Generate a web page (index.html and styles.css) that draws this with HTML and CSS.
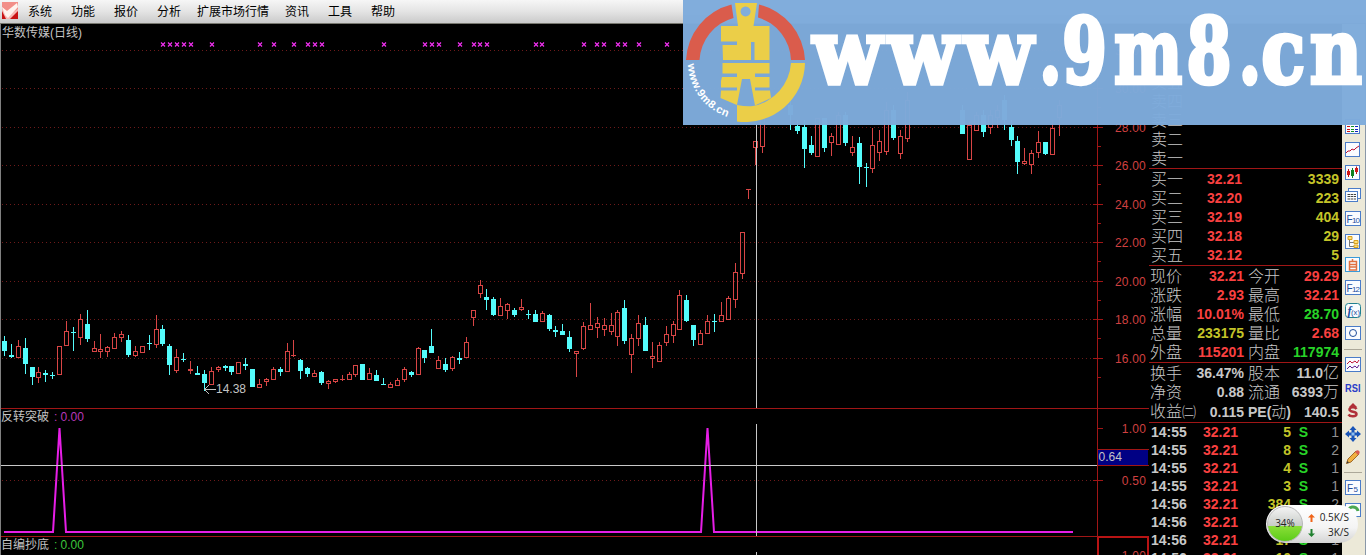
FILE: index.html
```html
<!doctype html>
<html lang="zh-CN">
  <head>
    <meta charset="utf-8">
    <title>华数传媒(日线)</title>
    <link rel="stylesheet" href="styles.css">
  </head>
  <body>
    <div class="menubar">
      <svg class="applogo" width="16" height="17" viewBox="0 0 16 17">
        <rect width="16" height="17" fill="#f6b9b4"/>
        <path d="M0 0H16V7L8 12L0 5Z" fill="#f28f88"/>
        <path d="M0 9L4 17H0Z M8 17L16 9V17Z" fill="#c81414"/>
        <path d="M0 5L5 9L15 1L16 5L6 16L3 13Z" fill="#fff4ee"/>
      </svg>
      <span>系统</span><span>功能</span><span>报价</span><span>分析</span><span class="wide">扩展市场行情</span><span>资讯</span><span>工具</span><span>帮助</span>
    </div>
    <div class="main">
      <svg class="chart" width="1149" height="531" viewBox="0 24 1149 531">
        <g id="grid" shape-rendering="crispEdges"></g>
        <g id="candles" shape-rendering="crispEdges"></g>
        <g id="marks"></g>
        <g class="frame" shape-rendering="crispEdges">
          <path d="M0 408.5H1149 M0 536.5H1149 M1097.5 24V555 M1149 24V555"/>
          <path class="hot" d="M1098 537H1148V556 M1098 537V556"/>
        </g>
        <path class="signal" d="M4 532H53L59.500 428L66 532H701L707.500 428L714 532H1073"/>
        <path class="cross" shape-rendering="crispEdges" d="M0 465.500H1097 M756.500 125V408 M756.500 424V536 M756.500 552V555"/>
        <path class="edge" shape-rendering="crispEdges" d="M.5 24V555"/>
        <g shape-rendering="crispEdges">
          <rect x="1098" y="450" width="50" height="15" fill="#000084"/>
          <path d="M1098 449.500H1149 M1098 465.500H1149" stroke="#a01616"/>
        </g>
        <text class="lbl" x="1098.500" y="461">0.64</text>
        <path d="M204 389.500H216 M209 385L204.500 389.500L209 394" fill="none" stroke="#c0c0c0"/>
        <text class="lbl" x="216" y="393">14.38</text>
        <text class="lbl" x="2" y="37">华数传媒(日线)</text>
        <text class="lbl" x="1" y="421">反转突破</text>
        <text class="lbl mag" x="54" y="421">:</text>
        <text class="lbl mag" x="60.500" y="421">0.00</text>
        <text class="lbl" x="1" y="549">自编抄底</text>
        <text class="lbl grn" x="54" y="549">:</text>
        <text class="lbl grn" x="60.500" y="549">0.00</text>
      </svg>

      <div class="quote">
        <div class="block sell">
          <div class="row"><span>卖五</span></div>
          <div class="row"><span>卖四</span></div>
          <div class="row"><span>卖三</span></div>
          <div class="row"><span>卖二</span></div>
          <div class="row"><span>卖一</span></div>
        </div>
        <div class="block buy">
          <div class="row"><span>买一</span><b class="red">32.21</b><b class="yel">3339</b></div>
          <div class="row"><span>买二</span><b class="red">32.20</b><b class="yel">223</b></div>
          <div class="row"><span>买三</span><b class="red">32.19</b><b class="yel">404</b></div>
          <div class="row"><span>买四</span><b class="red">32.18</b><b class="yel">29</b></div>
          <div class="row"><span>买五</span><b class="red">32.12</b><b class="yel">5</b></div>
        </div>
        <div class="block info">
          <div class="row"><span>现价</span><b class="red">32.21</b><span>今开</span><b class="red">29.29</b></div>
          <div class="row"><span>涨跌</span><b class="red">2.93</b><span>最高</span><b class="red">32.21</b></div>
          <div class="row"><span>涨幅</span><b class="red">10.01%</b><span>最低</span><b class="green">28.70</b></div>
          <div class="row"><span>总量</span><b class="yel">233175</b><span>量比</span><b class="red">2.68</b></div>
          <div class="row"><span>外盘</span><b class="red">115201</b><span>内盘</span><b class="green">117974</b></div>
        </div>
        <div class="block info fin">
          <div class="row"><span>换手</span><b>36.47%</b><span>股本</span><b>11.0<i>亿</i></b></div>
          <div class="row"><span>净资</span><b>0.88</b><span>流通</span><b>6393<i>万</i></b></div>
          <div class="row"><span>收益<small>㈡</small></span><b>0.115</b><span class="pe">PE(<i>动</i>)</span><b>140.5</b></div>
        </div>
        <div class="block ticks">
          <div class="row"><b>14:55</b><b class="red">32.21</b><b class="yel">5</b><b class="green">S</b><em>1</em></div>
          <div class="row"><b>14:55</b><b class="red">32.21</b><b class="yel">8</b><b class="green">S</b><em>2</em></div>
          <div class="row"><b>14:55</b><b class="red">32.21</b><b class="yel">4</b><b class="green">S</b><em>1</em></div>
          <div class="row"><b>14:55</b><b class="red">32.21</b><b class="yel">3</b><b class="green">S</b><em>1</em></div>
          <div class="row"><b>14:56</b><b class="red">32.21</b><b class="yel">384</b><b class="green">S</b><em>2</em></div>
          <div class="row"><b>14:56</b><b class="red">32.21</b><b class="yel">5</b><b class="green">S</b><em>1</em></div>
          <div class="row"><b>14:56</b><b class="red">32.21</b><b class="yel">17</b><b class="green">S</b><em>1</em></div>
          <div class="row"><b>14:56</b><b class="red">32.21</b><b class="yel">10</b><b class="green">S</b><em>1</em></div>
        </div>
      </div>

      <div class="tools">
        <svg viewBox="0 0 16 16"><rect class="bx" x=".5" y=".5" width="14" height="14"/><path d="M2 4.500H5M2 7.500H5M2 10.500H5M2 12.500H5" stroke="#d01010"/><path d="M6 4.500H9M6 7.500H9M6 10.500H9M6 12.500H9" stroke="#109020"/><path d="M10 4.500H13M10 7.500H13M10 10.500H13M10 12.500H13" stroke="#1020c0"/></svg>
        <svg viewBox="0 0 16 16"><rect class="bx" x=".5" y=".5" width="14" height="14"/><path d="M1 11L3 9L5 9L7 7L9 8L11 6L14 4" stroke="#c01030" fill="none"/></svg>
        <svg viewBox="0 0 16 16"><rect class="bx" x=".5" y=".5" width="14" height="14"/><path d="M3.500 4V12M11.500 1.500V9" stroke="#c01010"/><path d="M7.500 3V13" stroke="#108020"/><path d="M2 6H5V10H2ZM10 3H13V7H10Z" fill="#d01818"/><path d="M6 5H9V11H6Z" fill="#108020"/></svg>
        <svg viewBox="0 0 16 16"><rect class="bx" x="3.500" y=".5" width="12" height="10"/><rect class="bx" x=".5" y="3.500" width="12" height="10"/><path d="M2.500 6.500H11M2.500 8.500H11M2.500 11H11" stroke="#444" stroke-dasharray="2.500 .6"/></svg>
        <svg viewBox="0 0 16 16"><rect class="bx" x=".5" y=".5" width="15" height="14"/><text x="1.500" y="12">F</text><text x="7" y="12" class="s" textLength="8">10</text></svg>
        <svg viewBox="0 0 16 16"><rect class="bx" x=".5" y=".5" width="14" height="14"/><path d="M4.500 5V12.500H9M4.500 8.500H9" stroke="#777" fill="none"/><path d="M3 2.500H7V5.500H3ZM9 6.500H13V9.500H9ZM9 11H13V13.500H9Z" fill="#ffe27a" stroke="#d8a020"/></svg>
        <svg viewBox="0 0 16 16"><rect class="bx sky" x=".5" y=".5" width="14" height="14"/><path d="M4.500 4.500H11.500V13H4.500ZM7.500 2V4M4.500 7.500H11M4.500 10H11" stroke="#e07040" stroke-width="1.500" fill="none"/></svg>
        <svg viewBox="0 0 16 16"><rect class="bx" x=".5" y=".5" width="15" height="14"/><text x="1.500" y="12">F</text><text x="7" y="12" class="s" textLength="8">12</text></svg>
        <svg viewBox="0 0 16 16"><rect class="bx teal" x=".5" y=".5" width="15" height="14" rx="3"/><text x="2.500" y="11.500" class="fx">f</text><text x="6" y="11.500" class="x" textLength="9" lengthAdjust="spacingAndGlyphs">(x)</text></svg>
        <svg viewBox="0 0 16 16"><rect class="bx" x=".5" y=".5" width="15" height="13"/><circle cx="8" cy="7" r="3.500" fill="none" stroke="#1e4d9c"/></svg>
        <hr>
        <svg viewBox="0 0 16 16"><rect class="bx" x=".5" y=".5" width="15" height="14"/><path d="M2 7L5 4L7 6L10 4L12 6L14 3" stroke="#c01838" fill="none"/><path d="M2 12L5 9L7 11L10 9L12 11L14 8" stroke="#602090" fill="none"/></svg>
        <svg viewBox="0 0 16 16"><text x="0" y="12" class="rsi" textLength="15.500" lengthAdjust="spacingAndGlyphs">RSI</text></svg>
        <svg viewBox="0 0 16 16"><path d="M8 0L12 4H4Z" fill="#b03038"/><path d="M11.500 6C10 3.500 4.500 4 4.500 6.500C4.500 9.500 11.500 8 11.500 11C11.500 14 5 14 3.500 11.500" stroke="#b03038" stroke-width="2.500" fill="none"/></svg>
        <svg viewBox="0 0 16 16"><path d="M8 0L11.500 4H9.500V6.500H12V4.500L16 8L12 11.500V9.500H9.500V12H11.500L8 16L4.500 12H6.500V9.500H4V11.500L0 8L4 4.500V6.500H6.500V4H4.500Z" fill="#1a55b8"/><rect x="6.500" y="6.500" width="3" height="3" fill="#8ec0f0"/></svg>
        <svg viewBox="0 0 16 16"><path d="M1.500 14.500L3 10L11 2L14 5L6 13Z" fill="#f0b040" stroke="#a06a28"/><path d="M10 3L11.500 1.500Q13 .5 14.500 2.500Q15 4 14 5L13 6Z" fill="#d85a50"/><path d="M1.500 14.500L2.500 12L4 13.500Z" fill="#333"/></svg>
        <hr>
        <svg viewBox="0 0 16 16"><rect class="bx" x=".5" y=".5" width="15" height="14"/><text x="2" y="12">F</text><text x="8.500" y="12" class="s">5</text></svg>
        <svg viewBox="0 0 16 16"><rect class="bx" x=".5" y=".5" width="15" height="13"/><path d="M3 10A5 5 0 0 1 13 8" stroke="#4ca850" stroke-width="3" fill="none"/></svg>
      </div>
    </div>

    <div class="banner">
      <svg width="683" height="125" viewBox="683 0 683 125">
        <path class="r" d="M686 60A60 60 0 0 1 731.500 4.500L733.500 18A46 46 0 0 0 699.500 60Z"/>
        <path class="r" d="M759 4.500A60 60 0 0 1 805 60H791A46 46 0 0 0 758 17.500Z"/>
        <path class="y" d="M805 63A60 60 0 0 1 737 121.500V105Q747 107 753 106A47 47 0 0 0 791 63Z"/>
        <path class="y" fill-rule="evenodd" d="M735 3H757L753.500 26H769.500V60H754.500V42H751V60H723L722.500 45H737V41.500H721V26H738ZM745.500 6.500A5 5 0 1 0 745.600 6.500Z"/>
        <path class="y" d="M722.500 63H769.500V73.500H755V77H769.500V87.500H755V90.500H770L771 98L755 105.500L750 79H742L737 105L720.500 98L721 90.500H737V87.500H721V81L722 77H737V73.500H722.500Z"/>
        <path id="arc" d="M688 64A57.500 57.500 0 0 0 736 119" fill="none"/>
        <text class="ring"><textPath href="#arc" textLength="70">www.9m8.cn</textPath></text>
        <!-- letters of the site name differ in width -->
        <g transform="translate(812 0) scale(.9 1)"><text class="site" y="82.500" x="1 85 169">www</text></g>
        <g transform="translate(1040 0) scale(.72 1)"><text class="site" y="82.500" x="-1 31 103 204 276">.9m8.</text></g>
        <g transform="translate(1262 0) scale(.8 1)"><text class="site" y="82.500" x="-.5 60">cn</text></g>
      </svg>
    </div>

    <div class="netspeed">
      <div class="ball">34%</div>
      <div class="rates">
        <div><svg width="7" height="8" viewBox="0 0 7 8"><path d="M3.500 0L7 3.500H4.500V8H2.500V3.500H0Z" fill="#f06418"/></svg><span>0.5K/S</span></div>
        <div><svg width="7" height="8" viewBox="0 0 7 8"><path d="M3.500 8L7 4.500H4.500V0H2.500V4.500H0Z" fill="#208030"/></svg><span>3K/S</span></div>
      </div>
    </div>
    <script src="chart.js"></script>
  </body>
</html>
```
FILE: styles.css
```css
body {margin: 0; width: 1366px; height: 555px; overflow: hidden; position: relative; background: #000; font-family: "Liberation Sans", "Noto Sans CJK SC", sans-serif;}
.menubar {display: flex; align-items: center; box-sizing: border-box; height: 24px; padding: 0 0 2px 2px; background: linear-gradient(#f6f6f6, #e4e4e4 50%, #cacaca); border-bottom: 1px solid #77776f; font-size: 12px; color: #000;}
.menubar span {width: 43px; white-space: nowrap;}
.menubar span.wide {width: 88px; margin-left: -3px;}
.applogo {margin-right: 10px;}
.main {display: flex; height: 531px;}

.chart {flex: none; display: block;}
.grid {stroke: #6e1a1a; stroke-dasharray: 1 3;}
.tick {stroke: #a01616;}
.axis {font-size: 12px; letter-spacing: .2px; fill: #d04040; text-anchor: end;}
.frame path {stroke: #a01616; fill: none;}
.frame .hot {stroke: #b81414; stroke-width: 2;}
.up {fill: none; stroke: #d84545;}
.up.wick {stroke: #d84545;}
.down {fill: #54fcfc; stroke: none;}
.down.wick {stroke: #54fcfc;}
.mark {stroke: #f030f0; stroke-width: 1.2; fill: none;}
.signal {stroke: #e61ee6; stroke-width: 2; fill: none;}
.cross {stroke: #c8c8c8; fill: none;}
.edge {stroke: #808080;}
.lbl {font-size: 12px; fill: #c4c4c4;}
.lbl.mag {fill: #b838b8;}
.lbl.grn {fill: #3cc83c;}

.quote {flex: none; width: 193px; box-sizing: border-box; color: #c8c8c8; font-size: 16px; overflow: hidden;}
.block {box-sizing: border-box; border-bottom: 1px solid #a01616; padding: 1px 3px 0 2px;}
.row {display: grid; align-items: center; height: 19px; line-height: 19px; white-space: nowrap;}
.row > span {font-weight: 300;}
.row b {font-size: 14px; text-align: right;}
.row i {font-style: normal; font-weight: 300; font-size: 16px; line-height: 1;}
.sell {height: 145px; padding-top: 49px;}
.buy {height: 97px;}
.buy .row {grid-template-columns: 36px 55px 1fr;}
.info {height: 97px; padding-left: 1px;}
.info .row {grid-template-columns: 36px 58px 36px 1fr; }
.info .row > span + b + span {padding-left: 4px;}
.fin {height: 60px;}
.fin small {font-size: 14px;}
.row .pe {font-size: 14px; font-weight: bold;}
.row .pe i {font-size: 15px;}
.fin .row {grid-template-columns: 36px 58px 44px 1fr;}
.ticks {height: 150px; padding-top: 0; border-bottom: 0;}
.ticks .row {height: 18px; line-height: 18px; grid-template-columns: 36px 51px 53px 17px 1fr;}
.ticks b:first-child {text-align: left;}
.ticks em {font-style: normal; font-size: 14px; text-align: right; color: #909090;}
.red {color: #fa4040;}
.yel {color: #c4c428;}
.green {color: #28d428;}

.tools {flex: none; box-sizing: border-box; width: 24px; padding: 95px 0 0 3px; background: #ece9d8; border-right: 1px solid #8a98a8; overflow: hidden;}
.tools svg {display: block; width: 16px; height: 16px; margin-bottom: 7px;}
.tools hr {width: 18px; height: 1px; margin: 0 0 7px -1px; border: 0; background: #aca899;}
.bx {fill: #fafcff; stroke: #4a7cc8;}
.bx.sky {stroke: #3a9ad8;}
.bx.teal {stroke: #208090;}
.tools text {font-size: 10px; fill: #1e4d9c;}
.tools .s {font-size: 8px;}
.tools .fx {font: italic bold 12px "Liberation Serif", serif;}
.tools .x {font-size: 8px;}
.tools .rsi {font-size: 11px; font-weight: bold; fill: #2a3cc8;}

.banner {position: absolute; left: 683px; top: 0; width: 683px; height: 125px; background: rgba(126, 171, 219, .975);}
.banner svg {display: block;}
.banner .r {fill: #da5c4c;}
.banner .y {fill: #ebce48;}
.ring {font: bold 11px "Liberation Sans", sans-serif; fill: #fff;}
.site {font: bold 89px "DejaVu Serif", serif; fill: #fff; stroke: #fff; stroke-width: 4.5px;}

.netspeed {position: absolute; left: 1266px; top: 505px; width: 92px; height: 38px; box-sizing: border-box; padding: 1px 0 0 1px; display: flex; border-radius: 19px; background: linear-gradient(#fff, #f4f4f4 60%, #d4d4d4); color: #222; font-family: "Open Sans", sans-serif;}
.ball {width: 34px; height: 34px; border: 1px solid #b8b8b8; border-radius: 50%; line-height: 33px; text-align: center; font-size: 10px; background: linear-gradient(#f4f4f4, #c8ccc8 55%, #8ade38 56%, #5ccc18);}
.rates {flex: 1; padding: 4px 9px 0 5px; font-size: 10px;}
.rates div {display: flex; justify-content: space-between; align-items: center; height: 15px; line-height: 15px;}
```
FILE: chart.js
```js
// x, high, body top, body bottom, low; negative x = falling day
var days = [
  [-4,336,341,351,356],[-11,344,355,357,358],[18,340,346,358,358],[-25,338,348,364,374],[-32,367,367,377,385],
  [38,367,372,378,383],[-45,370,373,375,382],[-52,372,375,376,379],[59,346,346,375,375],[66,321,331,346,346],
  [-73,327,332,333,351],[80,314,319,338,345],[-87,310,324,339,342],[94,341,348,352,352],[100,334,349,352,358],
  [107,346,347,352,357],[114,333,337,349,349],[121,331,334,338,342],[-128,335,340,355,357],[135,346,351,356,357],
  [142,346,346,353,353],[-149,335,343,344,350],[156,315,329,345,348],[-162,325,329,344,346],[-169,344,346,365,375],
  [176,349,357,371,373],[-183,353,359,360,362],[190,361,369,371,374],[-197,366,373,375,375],[-204,370,374,383,391],
  [211,367,371,385,385],[218,366,367,370,372],[-225,365,366,368,371],[-231,366,366,372,375],[238,362,362,374,374],
  [-245,358,364,366,370],[-252,369,369,387,387],[259,379,384,388,388],[266,378,379,382,386],[273,367,369,380,380],
  [-280,367,369,372,376],[287,343,351,372,372],[293,340,355,356,357],[-300,359,360,371,379],[-307,367,368,374,377],
  [314,370,373,377,377],[-321,371,372,383,385],[328,380,381,384,389],[335,379,379,382,383],[342,375,379,380,381],
  [349,372,374,380,380],[355,365,365,375,377],[-362,364,364,380,380],[369,368,373,380,380],[-376,370,375,381,381],
  [-383,378,384,385,385],[390,382,384,388,388],[397,378,380,386,386],[404,367,369,380,382],[-411,371,372,375,377],
  [418,347,348,375,375],[-424,350,350,358,363],[-431,329,346,353,353],[438,356,360,369,369],[-445,358,364,370,372],
  [452,356,357,369,371],[-459,352,358,360,364],[466,337,342,358,358],[473,310,310,318,326],[480,280,285,294,298],
  [-486,289,297,300,310],[-493,297,299,315,316],[500,298,306,316,316],[507,303,304,311,319],[-514,308,310,315,317],
  [521,299,307,310,311],[-528,310,314,315,319],[-535,310,314,322,322],[542,311,313,322,322],[-549,314,315,329,331],
  [-555,326,330,332,337],[-562,324,331,335,335],[-569,331,337,349,352],[576,351,351,354,377],[583,322,326,349,350],
  [590,303,325,330,330],[597,317,323,328,338],[604,318,325,330,336],[611,313,325,332,335],[617,310,312,337,346],
  [-624,300,308,341,344],[631,334,338,355,373],[638,315,323,339,346],[-645,317,325,351,351],[652,342,356,359,368],
  [659,342,345,362,362],[666,326,334,343,346],[673,321,324,336,343],[679,290,295,330,330],[-686,295,300,321,322],
  [-693,325,325,340,346],[700,330,333,345,345],[707,315,321,334,334],[-714,314,321,322,332],[721,302,315,322,322],
  [728,296,298,320,320],[735,263,272,300,308],[742,232,232,274,279],[748,189,189,190,199],[755,141,141,148,165],
  [762,100,105,147,153],[-790,100,105,115,130],[-797,120,126,131,134],[-804,120,127,149,168],[-811,136,145,153,155],
  [817,118,118,157,157],[-824,118,118,148,152],[831,133,136,143,156],[838,112,115,145,145],[-845,112,115,143,146],
  [852,136,147,153,156],[-859,137,143,167,184],[-866,163,167,168,187],[872,128,145,169,173],[879,130,141,153,161],
  [886,102,110,152,155],[-893,105,110,138,140],[900,130,136,154,159],[907,92,100,139,142],[-962,105,110,134,134],
  [969,122,125,160,160],[976,112,115,131,131],[-983,110,115,132,137],[990,110,115,128,134],[997,105,110,118,128],
  [-1004,95,100,120,130],[-1011,120,127,140,146],[-1017,136,141,162,174],[1024,148,161,164,165],[1031,150,153,165,174],
  [1038,131,142,153,158],[-1045,142,142,154,155],[1052,120,128,155,155],[1059,100,105,118,136]
];
var marks = [163,170,177,184,191,212,260,274,294,308,315,322,384,425,432,439,460,474,480,487,536,542,584,597,604,618,625,639,667];

function candle(d)
{
  var x = Math.abs(d[0]), h = d[1], t = d[2], b = d[3], l = d[4], c = x + .5;
  if (d[0] < 0)
    return '<path class="down wick" d="M' + c + ' ' + h + 'V' + l + '"/><rect class="down" x="' + (x - 2) + '" y="' + t + '" width="5" height="' + (b - t) + '"/>';
  var s = '<path class="up wick" d="M' + c + ' ' + h + 'V' + t + 'M' + c + ' ' + b + 'V' + l + '"/>';
  if (b - t < 2)
    return s + '<path class="up" d="M' + (x - 2) + ' ' + (t + .5) + 'H' + (x + 3) + '"/>';
  return s + '<rect class="up" x="' + (x - 1.5) + '" y="' + (t + .5) + '" width="4" height="' + (b - t - 1) + '"/>';
}

function level(y, text)
{
  return '<path class="grid" d="M2 ' + y + 'H1097"/><path class="tick" d="M1093 ' + y + 'H1103"/>' +
    '<text class="axis" x="1146" y="' + (y + 4.5) + '">' + text + '</text>';
}

var g = '';
for (var i = 0; i < 9; i++)
{
  var y = Math.floor(50 + i * 38.5) + .5;
  g += level(y, (32 - i * 2) + '.00') + '<path class="tick" d="M1097 ' + (y + 19) + 'H1101"/>';
}
g += '<path class="tick" d="M1097 428.5H1103"/><text class="axis" x="1146" y="433">1.00</text>';
g += level(480.5, '0.50');
g += '<text class="axis" x="1146" y="560">1.00</text>';
document.getElementById('grid').innerHTML = g;
document.getElementById('candles').innerHTML = days.map(candle).join('');
document.getElementById('marks').innerHTML = marks.map(function (x) {
  return '<path class="mark" d="M' + (x - 2) + ' 42.500L' + (x + 2) + ' 46.500M' + (x + 2) + ' 42.500L' + (x - 2) + ' 46.500"/>';
}).join('');
```
